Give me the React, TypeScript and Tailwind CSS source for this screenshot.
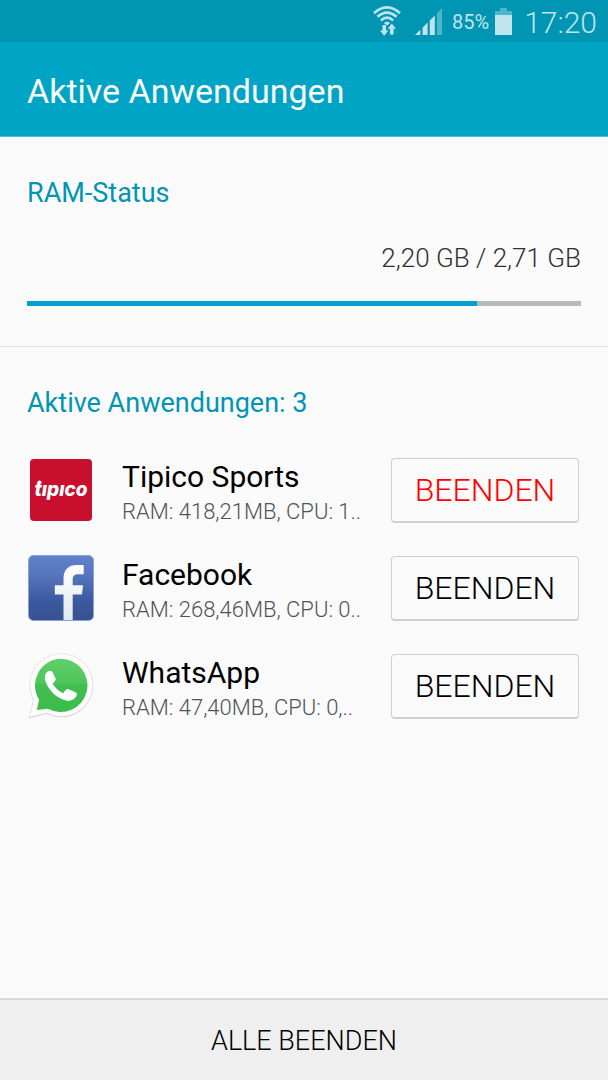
import clsx from "clsx";
import type { ReactNode } from "react";

type RunningApp = {
  id: string;
  name: string;
  usage: string;
  icon: ReactNode;
  critical?: boolean;
};

const RAM_USED = 2.2;
const RAM_TOTAL = 2.71;

const formatGb = (value: number) => `${value.toFixed(2).replace(".", ",")} GB`;

const WifiIcon = () => (
  <svg width="28" height="30" viewBox="0 0 28 30" aria-hidden="true">
    <g fill="none" stroke="#bfe4ec" strokeWidth="2.7">
      <path d="M1 7.2 Q14 -4.4 27 7.2" />
      <path d="M4.4 10.8 Q14 2.4 23.6 10.8" />
      <path d="M7.9 14.4 Q14 8.8 20.1 14.4" />
    </g>
    <path d="M10.9 17 Q14 14.4 17.1 17 L14 19.6Z" fill="#bfe4ec" />
    <path d="M9.4 19h3.6v5.4h2.4l-4.2 5.4L7 24.4h2.4z" fill="#bfe4ec" />
    <path d="M17 28.4h3.6v-5.6H23l-4.2-5.4-4.2 5.4H17z" fill="#bfe4ec" />
  </svg>
);

const SignalIcon = () => (
  <svg width="27" height="27" viewBox="0 0 27 27" aria-hidden="true">
    <g fill="#bfe4ec">
      <path d="M0 27 L5.3 21.7V27z" />
      <path d="M7.6 27v-7.4l5-5V27z" />
      <path d="M14.8 27V12.4l5-5V27z" />
    </g>
    <path d="M22 27V5.2L27 0v27z" fill="#4db6cb" />
  </svg>
);

const BatteryIcon = () => (
  <svg width="17" height="27" viewBox="0 0 17 27" aria-hidden="true">
    <path d="M5 0h7v3h5v4H0V3h5z" fill="#4db6cb" />
    <path d="M0 7h17v20H0z" fill="#bfe4ec" />
  </svg>
);

const TipicoIcon = () => (
  <svg width="66" height="66" viewBox="0 0 66 66" role="img" aria-label="Tipico">
    <rect x="2" y="2" width="62" height="62" rx="4" fill="#c8102e" />
    <circle cx="11.5" cy="25.6" r="2" fill="#fff" />
    <text
      x="33"
      y="39"
      textAnchor="middle"
      fill="#fff"
      className="font-['Inter'] text-[19px] font-extrabold italic"
    >
      tıpıco
    </text>
  </svg>
);

const FacebookIcon = () => (
  <svg width="66" height="66" viewBox="0 0 66 66" role="img" aria-label="Facebook">
    <defs>
      <linearGradient id="fb-bg" x1="0" y1="0" x2="0" y2="1">
        <stop offset="0" stopColor="#6083cc" />
        <stop offset="0.3" stopColor="#5675bd" />
        <stop offset="0.7" stopColor="#3c59a0" />
        <stop offset="1" stopColor="#36528f" />
      </linearGradient>
      <linearGradient id="fb-f" x1="0" y1="0" x2="0" y2="1">
        <stop offset="0" stopColor="#fff" />
        <stop offset="1" stopColor="#dfeaf2" />
      </linearGradient>
    </defs>
    <rect x="0.5" y="0.5" width="65" height="65" rx="5" fill="url(#fb-bg)" stroke="#8ba3d3" />
    <path
      d="M35.5 65V39.5H26.8V30.2h8.7v-6.5c0-9 5-13.7 13.4-13.7h6.8v9.2h-5c-4.4 0-6 1.6-6 5.4v5.6h10.3l-1 9.3h-9.3V65z"
      fill="url(#fb-f)"
    />
  </svg>
);

const WhatsAppIcon = () => (
  <svg width="66" height="66" viewBox="0 0 66 66" role="img" aria-label="WhatsApp">
    <defs>
      <linearGradient id="wa-bg" x1="0" y1="0" x2="0" y2="1">
        <stop offset="0" stopColor="#60cf6a" />
        <stop offset="0.45" stopColor="#4dc65b" />
        <stop offset="0.5" stopColor="#42be51" />
        <stop offset="1" stopColor="#3abc4a" />
      </linearGradient>
    </defs>
    <path
      d="M33 1.5a31.4 31.4 0 1 1-14 59.3L1 65.3l4.6-17.5A31.4 31.4 0 0 1 33 1.5z"
      fill="#c8c8c8"
    />
    <path
      d="M33 0.8a31.4 31.4 0 1 1-14 59.3L1.2 64.4l4.4-17.3A31.4 31.4 0 0 1 33 0.8z"
      fill="#fdfdfd"
      stroke="#dedede"
      strokeWidth="0.8"
    />
    <path
      d="M32.8 5.8a26.6 26.6 0 1 1-12.8 49.9L8.8 57l2.3-10.4A26.6 26.6 0 0 1 32.8 5.8z"
      fill="url(#wa-bg)"
    />
    <path
      d="M19.6 18.5c1.6-1 3.9-1.2 4.7.3l3.3 6.6c.6 1.3-.8 2.8-3 5.2 2.6 4.5 5.9 7.6 10.6 9.6 2.5-3.3 3.6-4.6 5-4.1l7.6 3.3c1.7.8 1.2 3-.2 4.9-2.2 3-5.6 4-9.3 3.2-9-2-17.3-9.6-20.4-18-1.6-4.4-1.4-8.6 1.7-11z"
      fill="#fff"
    />
  </svg>
);

const APPS: RunningApp[] = [
  {
    id: "tipico",
    name: "Tipico Sports",
    usage: "RAM: 418,21MB, CPU: 1..",
    icon: <TipicoIcon />,
    critical: true,
  },
  {
    id: "facebook",
    name: "Facebook",
    usage: "RAM: 268,46MB, CPU: 0..",
    icon: <FacebookIcon />,
  },
  {
    id: "whatsapp",
    name: "WhatsApp",
    usage: "RAM: 47,40MB, CPU: 0,..",
    icon: <WhatsAppIcon />,
  },
];

const StatusBar = () => (
  <div className="flex h-[42px] items-center justify-end bg-[#0095b3] pr-[11px] text-[#bfe4ec]">
    <WifiIcon />
    <span className="ml-[14px]">
      <SignalIcon />
    </span>
    <span className="ml-[10px] pt-[2px] text-[20px]">85%</span>
    <span className="ml-[6px]">
      <BatteryIcon />
    </span>
    <span className="ml-[12px] pt-[2px] text-[30px] font-light">17:20</span>
  </div>
);

const AppRow = ({ app }: { app: RunningApp }) => (
  <li className="flex h-[98px] items-center">
    <span className="shrink-0">{app.icon}</span>
    <div className="ml-7 min-w-0 flex-1 pt-2">
      <p className="truncate text-[30px] leading-[36px] text-black">{app.name}</p>
      <p className="truncate text-[22px] leading-[34px] font-light text-[#4f5557]">{app.usage}</p>
    </div>
    <button
      type="button"
      aria-label={`${app.name} BEENDEN`}
      className={clsx(
        "mr-[2px] h-[65px] w-[188px] shrink-0 rounded border border-b-2 border-[#cfcfcf] bg-[#fafafa] text-[32px] font-light",
        app.critical ? "text-[#ff0000]" : "text-black",
      )}
    >
      BEENDEN
    </button>
  </li>
);

export default function App() {
  return (
    <div className="flex min-h-screen flex-col bg-[#fafafa] font-['Roboto',sans-serif]">
      <StatusBar />
      <header className="flex h-[95px] items-center border-b border-[#4dbfd6] bg-[#00a5c6] px-[27px] pt-[4px]">
        <h1 className="text-[34px] text-[#fafafa]">Aktive Anwendungen</h1>
      </header>

      <main className="flex-1">
        <section className="border-b border-[#e2e2e2] px-[27px] pt-[39px] pb-10">
          <h2 className="text-[27px] leading-[34px] text-[#0095b3]">RAM-Status</h2>
          <p className="mt-[31px] text-right text-[26px] leading-[34px] font-light text-[#303030]">
            {formatGb(RAM_USED)} / {formatGb(RAM_TOTAL)}
          </p>
          <div
            role="progressbar"
            aria-label="RAM-Status"
            aria-valuemin={0}
            aria-valuemax={RAM_TOTAL}
            aria-valuenow={RAM_USED}
            className="mt-[26px] h-[5px] bg-[#b4babc]"
          >
            <div
              className="h-full bg-[#00a0d2]"
              style={{ width: `${(RAM_USED / RAM_TOTAL) * 100}%` }}
            />
          </div>
        </section>

        <section className="px-[27px] pt-[39px]">
          <h2 className="text-[27px] leading-[34px] text-[#0095b3]">
            Aktive Anwendungen: {APPS.length}
          </h2>
          <ul className="mt-[21px] pl-px">
            {APPS.map((app) => (
              <AppRow key={app.id} app={app} />
            ))}
          </ul>
        </section>
      </main>

      <footer className="border-t-2 border-[#d8d8d8] bg-[#efefef]">
        <button type="button" className="h-20 w-full pt-[3px] text-[27px] font-light text-black">
          ALLE BEENDEN
        </button>
      </footer>
    </div>
  );
}
